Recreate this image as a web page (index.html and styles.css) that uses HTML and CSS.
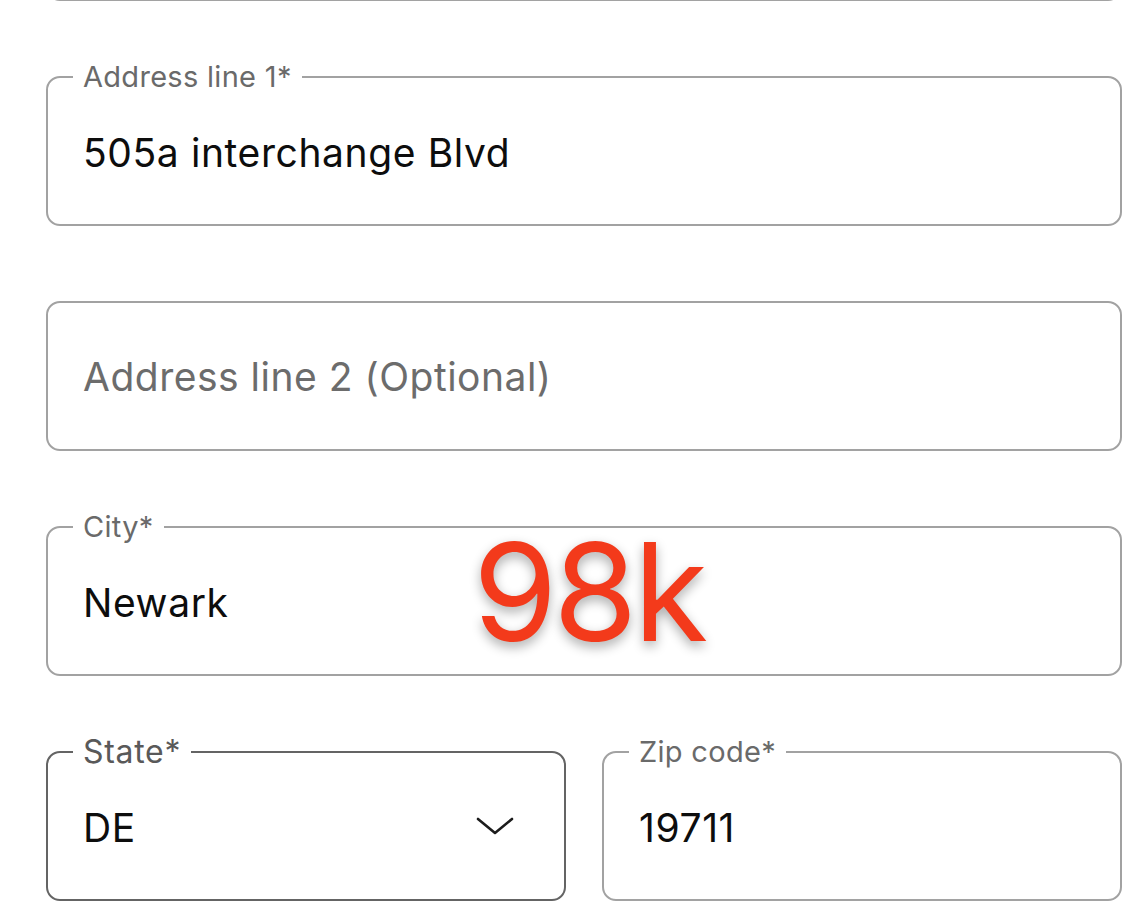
FILE: index.html
```html
<!DOCTYPE html>
<html lang="en">
<head>
<meta charset="utf-8">
<title>Address form</title>
<link rel="stylesheet" href="styles.css">
</head>
<body>
<form class="form">
  <fieldset class="field field-plain"><div class="value-row"></div></fieldset>

  <fieldset class="field">
    <legend class="label">Address line 1*</legend>
    <div class="value-row"><span class="value">505a interchange Blvd</span></div>
  </fieldset>

  <fieldset class="field field-plain">
    <div class="value-row"><span class="placeholder">Address line 2 (Optional)</span></div>
  </fieldset>

  <fieldset class="field field-city">
    <legend class="label">City*</legend>
    <div class="value-row"><span class="value">Newark</span></div>
    <div class="badge">98k</div>
  </fieldset>

  <div class="row">
    <fieldset class="field field-active">
      <legend class="label label-active">State*</legend>
      <div class="value-row select-row">
        <span class="value">DE</span>
        <svg class="chevron" width="38" height="20" viewBox="0 0 38 20" aria-hidden="true">
          <polyline points="2,3 19,17 36,3" fill="none" stroke="#1c1c1c" stroke-width="2.6" stroke-linecap="round" stroke-linejoin="round"/>
        </svg>
      </div>
    </fieldset>
    <fieldset class="field">
      <legend class="label">Zip code*</legend>
      <div class="value-row"><span class="value">19711</span></div>
    </fieldset>
  </div>
</form>
</body>
</html>
```

FILE: styles.css
```css
html, body {
  margin: 0;
  padding: 0;
  background: #ffffff;
  overflow: hidden;
}

body {
  font-family: "Inter", "Liberation Sans", sans-serif;
  color: #111111;
}

.form {
  display: flex;
  flex-direction: column;
  gap: 61px;
  margin: -163px 17px 0 46px;
}

.field {
  position: relative;
  margin: 0;
  min-width: 0;
  height: 164px;
  box-sizing: border-box;
  padding: 0 35px 12px 35px;
  border: 2px solid #a2a2a2;
  border-radius: 14px;
  display: flex;
  flex-direction: column;
}

.field-plain {
  margin-top: 14px;
  height: 150px;
  padding-bottom: 0;
}

.field-plain .value-row {
  height: 146px;
}

.label {
  margin-left: -10px;
  padding: 0 10px;
  font-size: 29px;
  line-height: 30px;
  color: #6a6a6a;
  letter-spacing: 0.3px;
}

.label-active {
  font-size: 32px;
  letter-spacing: 0.7px;
  color: #595959;
}

.field-active {
  border-color: #646464;
}

.value-row {
  height: 120px;
  display: flex;
  align-items: center;
}

.value {
  font-size: 39px;
  color: #0d0d0d;
  letter-spacing: 0.6px;
}

.placeholder {
  font-size: 39px;
  color: #6c6c6c;
  letter-spacing: 0.5px;
}

.select-row {
  justify-content: space-between;
  padding-right: 15px;
}

.chevron {
  display: block;
  margin-top: -2px;
}

.row {
  display: grid;
  grid-template-columns: 1fr 1fr;
  gap: 36px;
}

.badge {
  position: absolute;
  left: 425px;
  top: -20px;
  font-family: "Inter", sans-serif;
  font-weight: 400;
  font-size: 136px;
  line-height: 140px;
  letter-spacing: -4px;
  color: #f33a1b;
  text-shadow: 0 5px 12px rgba(0, 0, 0, 0.33);
}
```
